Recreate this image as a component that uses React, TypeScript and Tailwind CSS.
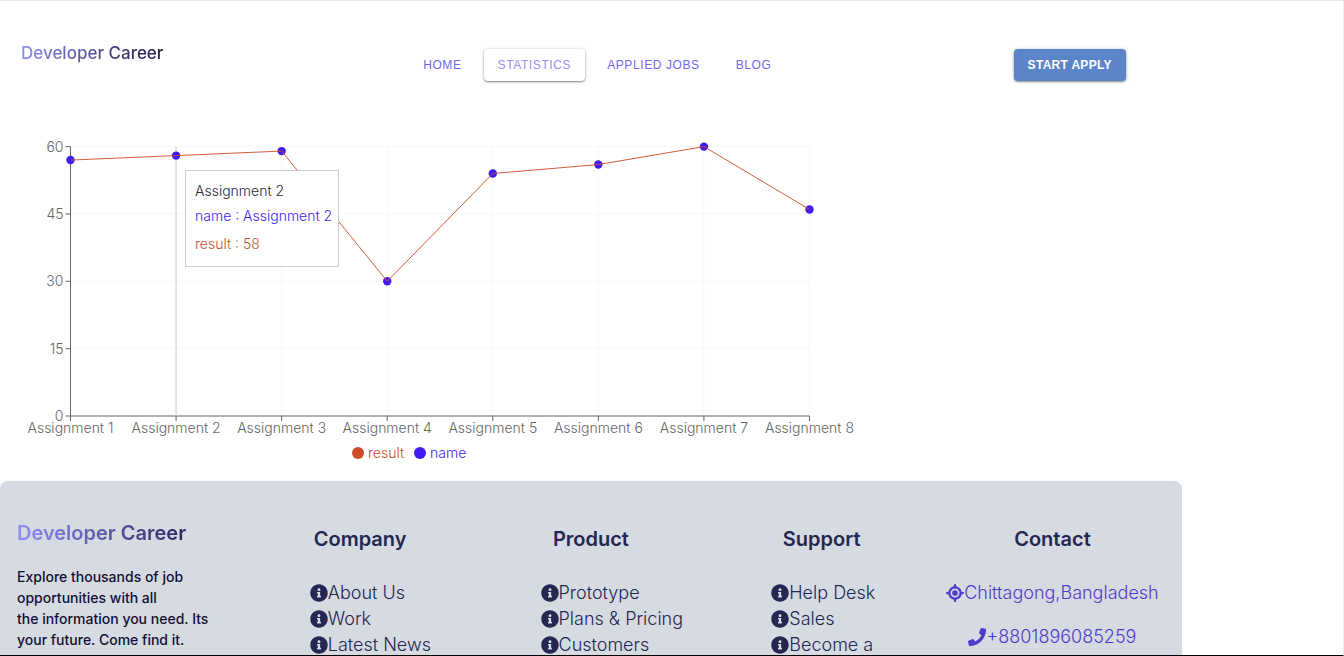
import { FaInfoCircle, FaPhone } from "react-icons/fa";
import { FaLocationCrosshairs } from "react-icons/fa6";

const results = [57, 58, 59, 30, 54, 56, 60, 46];
const ticks = [0, 15, 30, 45, 60];

const LEFT = 70.5;
const RIGHT = 809.5;
const TOP = 9.6;
const BOTTOM = 279;

const px = (i: number) => LEFT + ((RIGHT - LEFT) * i) / (results.length - 1);
const py = (v: number) => BOTTOM - ((BOTTOM - TOP) * v) / 60;

const navItems = [
  { label: "Home", active: false },
  { label: "Statistics", active: true },
  { label: "Applied Jobs", active: false },
  { label: "Blog", active: false },
];

const footerColumns = [
  { title: "Company", items: ["About Us", "Work", "Latest News"] },
  { title: "Product", items: ["Prototype", "Plans & Pricing", "Customers"] },
  { title: "Support", items: ["Help Desk", "Sales", "Become a"] },
];

function Header() {
  return (
    <header className="flex w-[88%] items-start justify-between pt-10 pr-14 pb-14 pl-[21px]">
      <h1 className="w-40">
        <a
          href="#home"
          className="block w-fit bg-linear-to-r from-[#8f8ff0] to-[#1f1a45] bg-clip-text text-[17px] leading-6 font-medium whitespace-nowrap text-transparent"
        >
          Developer Career
        </a>
      </h1>
      <nav className="mt-2 flex gap-2 font-['Liberation_Sans',sans-serif]">
        {navItems.map((item) => (
          <a
            key={item.label}
            href={"#" + item.label.toLowerCase().replace(" ", "-")}
            className={
              item.active
                ? "flex h-8 items-center rounded-sm bg-white px-3.5 text-xs tracking-wider whitespace-nowrap text-[#a08cf5] uppercase shadow-[0_1px_2px_rgba(0,0,0,0.45),0_0_4px_rgba(0,0,0,0.12)]"
                : "flex h-8 items-center rounded-sm px-3.5 text-xs tracking-wider whitespace-nowrap text-[#7168f0] uppercase"
            }
          >
            {item.label}
          </a>
        ))}
      </nav>
      <button
        type="button"
        className="mt-2 h-8 rounded-sm bg-[#5c85c9] px-3.5 font-['Liberation_Sans',sans-serif] text-xs font-bold tracking-wide whitespace-nowrap text-white uppercase shadow-[0_1px_2px_rgba(0,0,0,0.4),0_0_4px_rgba(0,0,0,0.15)]"
      >
        Start Apply
      </button>
    </header>
  );
}

function Chart() {
  const points = results.map((v, i) => `${px(i)},${py(v)}`).join(" ");
  return (
    <section className="relative w-[880px]">
      <svg width="880" height="300" className="block" role="img" aria-label="Assignment results">
        <g stroke="#f7f7f7">
          {ticks.map((t) => (
            <line key={t} x1={LEFT} x2={RIGHT} y1={py(t)} y2={py(t)} />
          ))}
          {results.map((_, i) => (
            <line key={i} x1={px(i)} x2={px(i)} y1={TOP} y2={BOTTOM} />
          ))}
        </g>
        <g stroke="#666666">
          <line x1={LEFT} x2={RIGHT} y1={BOTTOM} y2={BOTTOM} />
          <line x1={LEFT} x2={LEFT} y1={TOP} y2={BOTTOM} />
          {ticks.map((t) => (
            <line key={t} x1={LEFT - 5} x2={LEFT} y1={py(t)} y2={py(t)} />
          ))}
          {results.map((_, i) => (
            <line key={i} x1={px(i)} x2={px(i)} y1={BOTTOM} y2={BOTTOM + 5} />
          ))}
        </g>
        <line x1={px(1)} x2={px(1)} y1={TOP} y2={BOTTOM} stroke="#cccccc" />
        <g className="fill-[#666666] text-sm font-light">
          {ticks.map((t) => (
            <text key={t} x={LEFT - 7} y={py(t) + 5} textAnchor="end">
              {t}
            </text>
          ))}
          {results.map((_, i) => (
            <text key={i} x={px(i)} y={BOTTOM + 17} textAnchor="middle">
              {"Assignment " + (i + 1)}
            </text>
          ))}
        </g>
        {results.map((v, i) => (
          <circle key={i} cx={px(i)} cy={py(v)} r="4.2" fill="#3f1df0" />
        ))}
        <polyline points={points} fill="none" stroke="#cf4a26" strokeOpacity="0.9" />
      </svg>
      <ul className="ml-[352px] flex h-11 items-start gap-2.5 pt-1 text-sm leading-6 font-light">
        <li className="flex items-center gap-1 text-[#cf4a26]">
          <span className="size-3 rounded-full bg-[#cf4a26]" />
          result
        </li>
        <li className="flex items-center gap-1 text-[#3f1df0]">
          <span className="size-3 rounded-full bg-[#3f1df0]" />
          name
        </li>
      </ul>
      <div className="absolute top-[33px] left-[185px] h-[97px] w-[154px] border border-[#cccccc] bg-white px-[9px] pt-[7px] text-sm leading-[25px] font-light whitespace-nowrap">
        <p className="text-[#1f2937]">Assignment 2</p>
        <p className="text-[#3f1df0]">name : Assignment 2</p>
        <p className="pt-[3px] text-[#c0522f]">result : 58</p>
      </div>
    </section>
  );
}

function Footer() {
  return (
    <footer className="grid w-[88%] grid-cols-5 gap-1 rounded-lg bg-[#d6dae1] px-4 pt-10 pb-16 text-[#232751]">
      <div className="pl-px">
        <h2 className="block w-fit bg-linear-to-r from-[#9090f8] to-[#2f2860] bg-clip-text text-xl leading-6 font-semibold whitespace-nowrap text-transparent">
          Developer Career
        </h2>
        <p className="pt-[21px] text-sm leading-[21px] font-medium whitespace-nowrap text-[#120f35]">
          Explore thousands of job
          <br />
          opportunities with all
          <br />
          the information you need. Its
          <br />
          your future. Come find it.
        </p>
      </div>
      {footerColumns.map((column) => (
        <div key={column.title} className="pt-1">
          <h3 className="text-center text-xl leading-7 font-semibold">{column.title}</h3>
          <ul className="pt-[27px] pl-[63px] text-lg leading-[26px] font-light whitespace-nowrap">
            {column.items.map((item) => (
              <li key={item}>
                <a href="#footer" className="flex items-center">
                  <FaInfoCircle className="shrink-0" />
                  {item}
                </a>
              </li>
            ))}
          </ul>
        </div>
      ))}
      <address className="pt-1 text-lg font-light whitespace-nowrap text-[#4f3acb] not-italic">
        <h3 className="text-center text-xl leading-7 font-semibold text-[#232751]">Contact</h3>
        <p className="flex items-center justify-center pt-[27px] leading-[26px]">
          <FaLocationCrosshairs className="shrink-0" />
          Chittagong,Bangladesh
        </p>
        <p className="flex items-center justify-center pt-[18px] leading-[26px]">
          <FaPhone className="shrink-0" />
          +8801896085259
        </p>
      </address>
    </footer>
  );
}

export default function App() {
  return (
    <div className="h-screen overflow-hidden border-t border-r border-b border-t-[#e5e5e5] border-r-[#ececec] border-b-black bg-white font-[Inter,sans-serif]">
      <Header />
      <main>
        <Chart />
      </main>
      <Footer />
    </div>
  );
}
